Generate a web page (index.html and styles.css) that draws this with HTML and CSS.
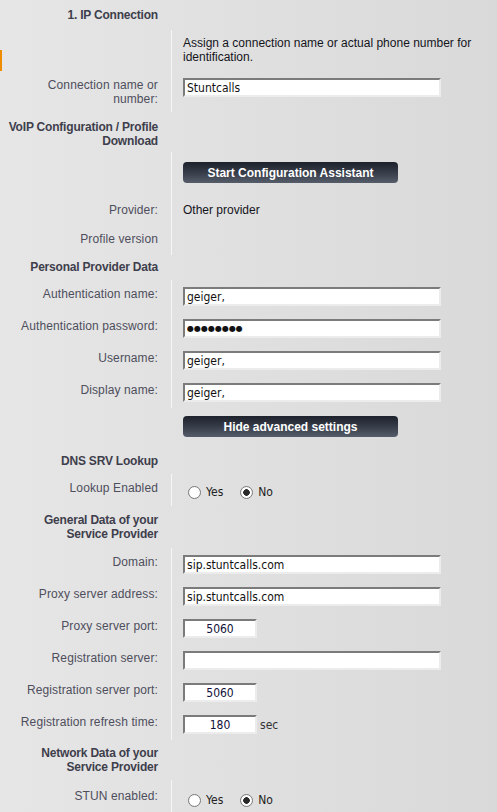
FILE: index.html
```html
<!DOCTYPE html>
<html lang="en">
<head>
    <meta charset="UTF-8">
    <meta name="viewport" content="width=device-width, initial-scale=1.0">
    <title>IP Connection</title>
    <link rel="stylesheet" href="styles.css">
</head>
<body>

    <div class="nav-marker"></div>

    <form class="settings">
        <!-- 1. IP Connection -->
        <div class="row section pad-first">
            <div class="label">1. IP Connection</div>
        </div>
        <div class="row field row-desc">
            <div class="label"></div>
            <div class="value text">Assign a connection name or actual phone number for identification.</div>
        </div>
        <div class="row field">
            <div class="label">Connection name or number:</div>
            <div class="value"><input class="box" type="text" value="Stuntcalls"></div>
        </div>

        <!-- VoIP Configuration -->
        <div class="row section pad-voip">
            <div class="label">VoIP Configuration / Profile Download</div>
        </div>
        <div class="row field row-btn">
            <div class="label"></div>
            <div class="value"><button type="button" class="dark-btn">Start Configuration Assistant</button></div>
        </div>
        <div class="row field row-provider">
            <div class="label">Provider:</div>
            <div class="value text">Other provider</div>
        </div>
        <div class="row field row-profile">
            <div class="label">Profile version</div>
            <div class="value"></div>
        </div>

        <!-- Personal Provider Data -->
        <div class="row section pad-personal">
            <div class="label">Personal Provider Data</div>
        </div>
        <div class="row field">
            <div class="label">Authentication name:</div>
            <div class="value"><input class="box" type="text" value="geiger,"></div>
        </div>
        <div class="row field">
            <div class="label">Authentication password:</div>
            <div class="value"><input class="box pass" type="text" value="&#9679;&#9679;&#9679;&#9679;&#9679;&#9679;&#9679;&#9679;"></div>
        </div>
        <div class="row field">
            <div class="label">Username:</div>
            <div class="value"><input class="box" type="text" value="geiger,"></div>
        </div>
        <div class="row field">
            <div class="label">Display name:</div>
            <div class="value"><input class="box" type="text" value="geiger,"></div>
        </div>
        <div class="row plain row-hide">
            <div class="label"></div>
            <div class="value"><button type="button" class="dark-btn">Hide advanced settings</button></div>
        </div>

        <!-- DNS SRV Lookup -->
        <div class="row section pad-dns">
            <div class="label">DNS SRV Lookup</div>
        </div>
        <div class="row field">
            <div class="label">Lookup Enabled</div>
            <div class="value radios">
                <label class="opt"><input type="radio" name="dns"> Yes</label>
                <label class="opt"><input type="radio" name="dns" checked> No</label>
            </div>
        </div>

        <!-- General Data -->
        <div class="row section pad-general">
            <div class="label">General Data of your Service Provider</div>
        </div>
        <div class="row field">
            <div class="label">Domain:</div>
            <div class="value"><input class="box" type="text" value="sip.stuntcalls.com"></div>
        </div>
        <div class="row field">
            <div class="label">Proxy server address:</div>
            <div class="value"><input class="box" type="text" value="sip.stuntcalls.com"></div>
        </div>
        <div class="row field">
            <div class="label">Proxy server port:</div>
            <div class="value"><input class="box short" type="text" value="5060"></div>
        </div>
        <div class="row field">
            <div class="label">Registration server:</div>
            <div class="value"><input class="box" type="text" value=""></div>
        </div>
        <div class="row field">
            <div class="label">Registration server port:</div>
            <div class="value"><input class="box short" type="text" value="5060"></div>
        </div>
        <div class="row field">
            <div class="label">Registration refresh time:</div>
            <div class="value"><input class="box short" type="text" value="180"><span class="unit">sec</span></div>
        </div>

        <!-- Network Data -->
        <div class="row section pad-network">
            <div class="label">Network Data of your Service Provider</div>
        </div>
        <div class="row field row-stun">
            <div class="label">STUN enabled:</div>
            <div class="value radios">
                <label class="opt"><input type="radio" name="stun"> Yes</label>
                <label class="opt"><input type="radio" name="stun" checked> No</label>
            </div>
        </div>
    </form>

</body>
</html>
```

FILE: styles.css
```css
body {
    margin: 0;
    padding: 0;
    min-height: 100vh;
    background: linear-gradient(to right, #e6e6e6, #d9d9d9);
    font-family: "Liberation Sans", Arial, sans-serif;
    font-size: 12px;
    line-height: 14px;
    color: #4e4e5c;
    position: relative;
    overflow: hidden;
}

/* small orange marker on the left edge (from the side navigation) */
.nav-marker {
    position: absolute;
    left: 0;
    top: 50px;
    width: 2px;
    height: 21px;
    background-color: #f08c00;
}

.settings {
    margin: 0;
}

.row {
    display: grid;
    grid-template-columns: 171px 1fr;
}

.row .label {
    text-align: right;
    padding: 7px 13px 6px 6px;
    letter-spacing: 0.12px;
}

.row .value {
    padding: 7px 12px 6px 11px;
}

.field .value {
    border-left: 1px solid #f6f6f6;
}

.plain .value {
    border-left: 1px solid transparent;
}

/* section headers */
.row.section .label {
    font-weight: bold;
    color: #3e3e4c;
    padding-left: 0;
    letter-spacing: -0.2px;
}

.row.pad-first .label    { padding-top: 8px; padding-bottom: 8px; }
.row.pad-voip .label     { padding-top: 8px; padding-bottom: 4px; }
.row.pad-personal .label { padding-top: 5px; padding-bottom: 6px; }
.row.pad-dns .label      { padding-top: 9px; padding-bottom: 6px; }
.row.pad-general .label  { padding-top: 7px; padding-bottom: 7px; }
.row.pad-network .label  { padding-top: 6px; padding-bottom: 6px; }

.row-desc .value     { padding-top: 6px; padding-bottom: 7px; }
.row-btn .value      { padding-top: 10px; padding-bottom: 9px; }
.row-provider .label { padding-top: 11px; }
.row-provider .value { padding-top: 11px; padding-bottom: 8px; }
.row-profile .label  { padding-bottom: 9px; }
.row-hide .value     { padding-top: 8px; padding-bottom: 8px; }
.row-stun .label     { padding-top: 9px; }
.row-stun .value     { padding-top: 9px; }

.text {
    color: #14141c;
}

/* inputs */
.box {
    display: block;
    box-sizing: border-box;
    width: 258px;
    height: 19px;
    margin: 0;
    padding: 0 2px;
    border-top: 2px solid #7b7b7b;
    border-left: 2px solid #7b7b7b;
    border-right: 2px solid #ececec;
    border-bottom: 2px solid #ececec;
    background-color: #fff;
    font-family: "DejaVu Sans Condensed", "DejaVu Sans", sans-serif;
    font-size: 12px;
    color: #111;
    outline: none;
}

.box.short {
    display: inline-block;
    width: 74px;
    text-align: center;
    vertical-align: middle;
    color: #10103a;
}

.box.pass {
    font-family: "DejaVu Sans", sans-serif;
    font-size: 8px;
    letter-spacing: 0;
}

.unit {
    margin-left: 3px;
    font-family: "DejaVu Sans Condensed", "DejaVu Sans", sans-serif;
    font-size: 12px;
    color: #333;
    vertical-align: middle;
}

/* dark buttons */
.dark-btn {
    display: block;
    width: 215px;
    height: 21px;
    margin: 0;
    padding: 0;
    border: none;
    border-radius: 4px;
    background: linear-gradient(to bottom, #1c212b, #363c48 50%, #565d6a);
    color: #fff;
    font-family: "Liberation Sans", Arial, sans-serif;
    font-size: 12px;
    font-weight: bold;
    cursor: pointer;
}

/* radio groups */
.row .radios {
    display: flex;
    align-items: center;
    gap: 17px;
    height: 19px;
    padding-left: 16px;
}

.opt {
    display: flex;
    align-items: center;
    gap: 5px;
    font-family: "DejaVu Sans Condensed", "DejaVu Sans", sans-serif;
    font-size: 12px;
    color: #222;
    padding-top: 3px;
}

.opt input {
    appearance: none;
    -webkit-appearance: none;
    width: 13px;
    height: 13px;
    margin: 0;
    border: 1px solid #7a7a7a;
    border-radius: 50%;
    background: radial-gradient(circle, #fff 55%, #e8e8e8);
}

.opt input:checked {
    background: radial-gradient(circle, #2a2a2a 0, #2a2a2a 3px, #fff 3.6px, #fff 55%, #e8e8e8);
}
```
